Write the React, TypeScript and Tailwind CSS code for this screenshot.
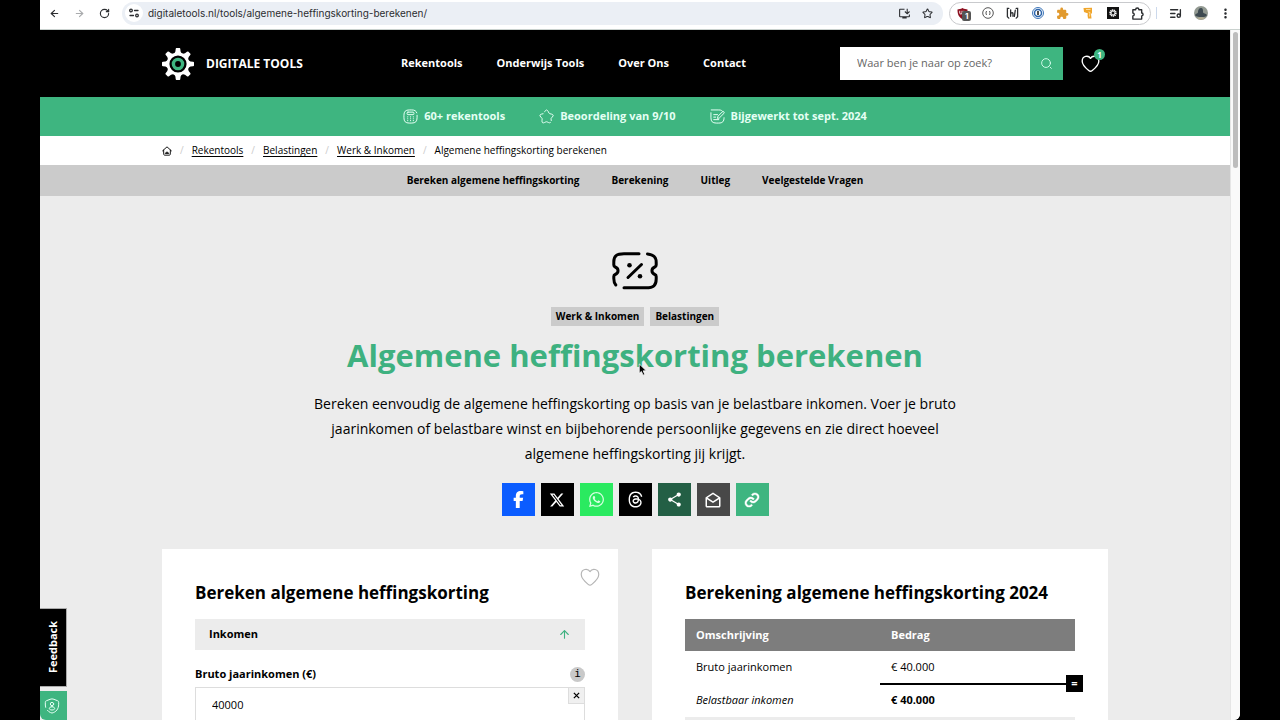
// App.tsx
import React from 'react';
import { ArrowLeft, ArrowRight, RotateCw, Star, ListMusic, ArrowUp } from 'lucide-react';
import { FaFacebookF, FaXTwitter, FaWhatsapp, FaThreads } from 'react-icons/fa6';
import { MdShare, MdMoreVert, MdExtension, MdOutlineInstallDesktop } from 'react-icons/md';
import { BiEnvelopeOpen, BiLink } from 'react-icons/bi';

interface IconProps {
  className?: string;
}

const HeartIcon: React.FC<IconProps> = ({ className }) => (
  <svg viewBox="0 0 24 24" fill="none" stroke="currentColor" strokeLinecap="round" strokeLinejoin="round" className={className}>
    <path d="M12 5.500C9.500 1.300 1.500 1.900 1.500 9.100c0 5 4.400 8.600 8.300 11.800 1.700 1.400 2.700 1.400 4.400 0 3.900-3.200 8.300-6.800 8.300-11.800 0-7.200-8-7.800-10.500-3.600z" />
  </svg>
);

const GearLogo: React.FC<IconProps> = ({ className }) => (
  <svg viewBox="0 0 32 32" className={className} aria-hidden="true">
    <circle cx="16" cy="16" r="10" fill="none" stroke="#fff" strokeWidth="2.800" />
    {[0, 45, 90, 135, 180, 225, 270, 315].map((angle) => (
      <path key={angle} d="M14.400 0h3.200q.6 0 .7 1l.3 2.500 1.400 2.500h-8l1.400-2.500.3-2.500q.1-1 .7-1z" fill="#fff" transform={`rotate(${angle} 16 16)`} />
    ))}
    <circle cx="16" cy="16" r="4.600" fill="none" stroke="#3eb580" strokeWidth="3.400" />
  </svg>
);

const CalculatorIcon: React.FC<IconProps> = ({ className }) => (
  <svg viewBox="0 0 24 24" fill="none" stroke="currentColor" strokeWidth="1.600" strokeLinecap="round" className={className}>
    <path d="M22.500 10v4c0 6-2.500 8.500-8.500 8.500h-4c-6 0-8.500-2.500-8.500-8.500v-4c0-6 2.500-8.500 8.500-8.500h4c4.500 0 7.100 1.400 8.100 4.700" />
    <rect x="6.500" y="5" width="11" height="4" rx="1.500" />
    <path d="M7.500 12.500h.1M12 12.500h.1M16.500 12.500h.1M7.500 15.500h.1M12 15.500h.1M16.500 15.500h.1M7.500 18.500h.1M12 18.500h.1M16.500 18.500h.1" strokeWidth="1.800" />
  </svg>
);

const RatingIcon: React.FC<IconProps> = ({ className }) => (
  <svg viewBox="0 0 24 24" fill="none" stroke="currentColor" strokeWidth="1.600" strokeLinecap="round" strokeLinejoin="round" className={className}>
    <path d="M9 4.500c2-4 4-4 6 0l1 2c.3.600.8.900 1.500 1.100l2 .4c3.700.8 4.200 2.400 1.600 5l-1.300 1.400c-.5.500-.6 1-.5 1.700l.3 2.400" />
    <path d="M18.500 21.500c-.8.900-2 .8-3.500.1l-2-1c-.7-.3-1.300-.3-2 0l-2 1c-3 1.400-4.500.4-4.200-2.900l.2-2.500c.1-.700-.1-1.200-.5-1.700L3 13C.5 10.300 1 8.800 4.500 8l2-.4" />
  </svg>
);

const EditIcon: React.FC<IconProps> = ({ className }) => (
  <svg viewBox="0 0 24 24" fill="none" stroke="currentColor" strokeWidth="1.600" strokeLinecap="round" strokeLinejoin="round" className={className}>
    <path d="M20.500 4c-1.200-1.700-3-2.500-6.500-2.500H2M1.500 6v8c0 6 2.500 8.500 8.500 8.500h4c6 0 8.500-2.500 8.500-8.500" />
    <path d="M12 14.500l.8-3 7-7c1.500-1.500 4 .8 2.500 2.500l-7 7zM6 9h6M6 13h3M6 17h8" />
  </svg>
);

const HomeIcon: React.FC<IconProps> = ({ className }) => (
  <svg viewBox="0 0 24 24" fill="none" stroke="currentColor" strokeWidth="2.200" strokeLinecap="round" strokeLinejoin="round" className={className}>
    <path d="M1.500 11.500 12 2l10.500 9.500M4 10v9c0 2 .8 3 3 3h10c2.200 0 3-1 3-3v-9" />
    <path d="M8 17c1-3.300 7-3.300 8 0z" />
  </svg>
);

const TicketIcon: React.FC<IconProps> = ({ className }) => (
  <svg viewBox="0 0 46 38" fill="none" stroke="#000" strokeWidth="3" strokeLinecap="round" strokeLinejoin="round" className={className}>
    <path d="M27 1.800H12C4.500 1.800 1.800 4 1.800 10v3c0 1 .4 1.600 1.400 2 3.800 1.600 3.800 6 0 7.500-1 .4-1.400 1-1.400 2v2c0 3 .6 4.800 2 6.500" />
    <path d="M35.500 1.900c6.300.6 8.700 3 8.700 8.600V13c0 1-.4 1.600-1.400 2-3.800 1.600-3.800 6 0 7.500 1 .4 1.400 1 1.400 2V27c0 6.500-2.700 8.700-10.200 8.700H12" />
    <path d="M16 25.500 29.500 12.500" />
    <circle cx="17.500" cy="13.300" r="2.300" fill="#000" stroke="none" />
    <circle cx="28" cy="24.300" r="2.300" fill="#000" stroke="none" />
  </svg>
);

const PrivacyIcon: React.FC<IconProps> = ({ className }) => (
  <svg viewBox="0 0 24 24" fill="none" stroke="currentColor" strokeWidth="1.500" strokeLinecap="round" className={className}>
    <path d="M2.500 14c-.5-2-.7-5-.5-7.500C2 5 2.500 4.500 4 4l5-2c2-.8 4-.8 6 0l5 2c1.500.5 2 1 2 2.500.5 8-2 13-8 15.500-1.500.7-2.500.7-4 0-2-.8-3.600-2-4.800-3.500" />
    <circle cx="12" cy="9" r="2.500" />
    <path d="M12 13c-5 0-6 5 0 5s5-5 0-5z" />
  </svg>
);

const BrowserBar = () => (
  <div className="flex h-[30px] shrink-0 items-center border-b border-[#c9d1ce] bg-white pt-px pr-[2px] pb-1 pl-[2px] text-[#2b2d30]">
    <div className="flex">
      <button aria-label="Back" className="flex w-[25px] justify-center"><ArrowLeft size={11} strokeWidth={2.5} /></button>
      <button aria-label="Forward" className="flex w-[25px] justify-center text-[#a9abad]"><ArrowRight size={11} strokeWidth={2.5} /></button>
      <button aria-label="Reload" className="flex w-[25px] justify-center"><RotateCw size={11} strokeWidth={2.5} /></button>
    </div>
    <div className="ml-[5px] flex h-[23px] min-w-0 flex-1 items-center rounded-full bg-[#ebeff5] pr-1 pl-[3px]">
      <button aria-label="Site information" className="flex size-[18px] shrink-0 items-center justify-center rounded-full bg-white">
        <svg viewBox="0 0 10 10" className="size-[10px]" fill="none" stroke="currentColor" strokeWidth="1.300" strokeLinecap="round">
          <circle cx="2" cy="2.500" r="1.300" />
          <path d="M5.500 2.500h3.500M1 7.500h3.500" />
          <circle cx="8" cy="7.500" r="1.300" />
        </svg>
      </button>
      <input
        aria-label="Address"
        className="ml-[5px] min-w-0 flex-1 bg-transparent text-[10px] outline-none"
        defaultValue="digitaletools.nl/tools/algemene-heffingskorting-berekenen/"
      />
      <button aria-label="Install" className="flex w-[23px] justify-center"><MdOutlineInstallDesktop size={13} /></button>
      <button aria-label="Bookmark" className="flex w-[23px] justify-center"><Star size={11} strokeWidth={2.2} /></button>
    </div>
    <div className="ml-1.5 flex h-[23px] items-center rounded-full border border-[#c9cacd]">
      <button aria-label="Ad blocker" className="relative flex w-[25px] justify-center">
        <svg viewBox="0 0 12 12" className="size-[11px]">
          <path d="M6 0c2 1.200 4 1.500 5.500 1.500C11.500 7 10 10 6 12 2 10 .5 7 .5 1.500 2 1.500 4 1.200 6 0z" fill="#8c1020" />
          <path d="M3 3v2.500c0 1.500 2.500 1.500 2.500 0V3M7.500 3v4" stroke="#fff" fill="none" />
        </svg>
        <span className="absolute top-[3px] left-3 rounded-xs bg-[#555] px-[3px] text-[8px] leading-[10px] font-bold text-white">1</span>
      </button>
      <button aria-label="Code" className="flex w-[25px] justify-center">
        <svg viewBox="0 0 12 12" className="size-[12px]" fill="none" stroke="#555">
          <circle cx="6" cy="6" r="5.300" />
          <path d="M4.500 4q-1.200 2 0 4M7.500 4q1.200 2 0 4" />
        </svg>
      </button>
      <button aria-label="Heading inspector" className="flex w-[25px] justify-center">
        <svg viewBox="0 0 14 14" className="size-[13px]" fill="none" stroke="currentColor" strokeWidth="1.400" strokeLinecap="round">
          <path d="M3 1.500H1.500v9L3 12M11 1.500h1.500v9L11 12M5 3v7M5 7q2.500-2 2.500 0v3M10 3.500 9 10" />
        </svg>
      </button>
      <button aria-label="Passwords" className="flex w-[25px] justify-center">
        <svg viewBox="0 0 12 12" className="size-[12px]">
          <circle cx="6" cy="6" r="5.500" fill="#fff" stroke="#3d75b8" />
          <circle cx="6" cy="6" r="3.500" fill="#fff" stroke="#2d66ad" strokeWidth="1.500" />
          <path d="M6 4v4" stroke="#222" strokeWidth="1.600" />
        </svg>
      </button>
      <button aria-label="Extension" className="flex w-[25px] justify-center text-[#e19a2e]"><MdExtension size={13} /></button>
      <button aria-label="Tag extension" className="flex w-[25px] justify-center">
        <svg viewBox="0 0 12 12" className="size-[12px]">
          <path d="M1.500 1 10 .8V6L9 7l.5 4.500H6L5.500 8l.5-1.500L2 5z" fill="#f0a52b" />
          <path d="M4 2.500h4.500M6.500 5l1.500.5-.5 4" stroke="#fff0c8" strokeWidth=".7" fill="none" />
        </svg>
      </button>
      <button aria-label="Settings extension" className="flex w-[25px] justify-center">
        <svg viewBox="0 0 12 12" className="size-[12px]">
          <path d="M0 0h12v12H0z" fill="#111" />
          <circle cx="6" cy="6" r="2.800" fill="none" stroke="#fff" strokeWidth="1.800" strokeDasharray="1.200 .5" />
          <circle cx="6" cy="6" r="1.900" fill="none" stroke="#fff" strokeWidth=".8" />
        </svg>
      </button>
      <button aria-label="Extensions" className="flex w-[25px] justify-center">
        <svg viewBox="0 0 14 14" className="size-[13px]" fill="none" stroke="currentColor" strokeWidth="1.500" strokeLinejoin="round">
          <path d="M2 3h3c0-2.500 3.500-2.500 3.500 0h3v3.500c2 0 2 3 0 3V13H2V9.500c2-.3 2-2.700 0-3z" />
        </svg>
      </button>
    </div>
    <span className="ml-[5px] h-3 w-px bg-[#ccd9ec]" />
    <button aria-label="Media" className="ml-[6px] flex w-[25px] justify-center"><ListMusic size={13} strokeWidth={2.5} /></button>
    <button aria-label="Profile" className="flex w-[25px] justify-center">
      <svg viewBox="0 0 14 14" className="size-[14px]">
        <circle cx="7" cy="7" r="7" fill="#929991" />
        <path d="M1 9c1-2 3-1 3-3s1-4 3-4 2 2 2 4 3 1 4 3c-1 2-3 2-5 2s-6 0-7-2z" fill="#3e4a51" />
        <path d="M3 12c2-1 6-1 8 0-2 2-6 2-8 0z" fill="#b3ac91" />
      </svg>
    </button>
    <button aria-label="Menu" className="flex w-[25px] justify-center"><MdMoreVert size={15} /></button>
  </div>
);

const mainLinks = ['Rekentools', 'Onderwijs Tools', 'Over Ons', 'Contact'];
const crumbs = ['Rekentools', 'Belastingen', 'Werk & Inkomen'];
const pageLinks = ['Bereken algemene heffingskorting', 'Berekening', 'Uitleg', 'Veelgestelde Vragen'];

const usps = [
  { icon: CalculatorIcon, text: '60+ rekentools' },
  { icon: RatingIcon, text: 'Beoordeling van 9/10' },
  { icon: EditIcon, text: 'Bijgewerkt tot sept. 2024' },
];

const shareButtons = [
  { label: 'Facebook', color: 'bg-[#0b5cff]', icon: <FaFacebookF size={17} /> },
  { label: 'X', color: 'bg-black', icon: <FaXTwitter size={16} /> },
  { label: 'WhatsApp', color: 'bg-[#2aea60]', icon: <FaWhatsapp size={17} className="text-[#d8ffe2]" /> },
  { label: 'Threads', color: 'bg-black', icon: <FaThreads size={17} /> },
  { label: 'Delen', color: 'bg-[#235f45]', icon: <MdShare size={17} /> },
  { label: 'E-mail', color: 'bg-[#484848]', icon: <BiEnvelopeOpen size={18} /> },
  { label: 'Link kopiëren', color: 'bg-[#3eb580]', icon: <BiLink size={20} className="stroke-[.5]" /> },
];

const SiteHeader = () => (
  <header className="bg-black text-white">
    <div className="mx-auto flex h-[67px] max-w-[946px] items-center">
      <a href="#" className="flex w-[239px] items-center gap-3 text-[12px] font-bold">
        <GearLogo className="size-8" />
        DIGITALE TOOLS
      </a>
      <nav className="flex gap-[34px] text-[11px] font-bold">
        {mainLinks.map((link) => (
          <a key={link} href="#">{link}</a>
        ))}
      </nav>
      <form className="ml-auto flex h-[33px]">
        <input
          type="search"
          aria-label="Zoeken"
          placeholder="Waar ben je naar op zoek?"
          className="w-[190px] bg-white px-[17px] text-[11px] text-black outline-none placeholder:text-[#666]"
        />
        <button type="button" aria-label="Zoek" className="flex w-[33px] items-center justify-center bg-[#3eb580]">
          <svg viewBox="0 0 12 12" className="size-[11px]" fill="none" stroke="#d9fff0" strokeLinecap="round">
            <circle cx="5.500" cy="5.500" r="4.800" />
            <path d="M10 10l1.300 1.300" />
          </svg>
        </button>
      </form>
      <a href="#" aria-label="Favorieten" className="relative mr-2 ml-[18px]">
        <HeartIcon className="size-[19px] stroke-[1.700]" />
        <span className="absolute -top-[5px] left-[13px] flex size-[11px] items-center justify-center rounded-full bg-[#3eb580] text-[8px] font-bold">1</span>
      </a>
    </div>
  </header>
);

const Hero = () => (
  <section className="flex flex-col items-center pt-[56px] text-center">
    <TicketIcon className="h-[38px] w-[46px]" />
    <div className="mt-[17px] flex gap-[6px] text-[10px] leading-[19px] font-bold">
      <a href="#" className="bg-[#cbcbcb] px-[5px]">Werk &amp; Inkomen</a>
      <a href="#" className="bg-[#cbcbcb] px-[5px]">Belastingen</a>
    </div>
    <h1 className="relative mt-[9px] text-[31px] leading-[40px] font-bold text-[#3eb180]">
      Algemene heffingskorting berekenen
      <svg viewBox="0 0 10 15" className="absolute top-7 left-[291px] h-[14px] w-[10px]">
        <path d="M1 1v10l2.300-2 1.800 4 1.800-.8L5.200 8.400H8.500z" fill="#000" stroke="#fff" strokeWidth=".8" />
      </svg>
    </h1>
    <p className="mt-4 max-w-[668px] text-[14px] leading-[25px]">
      Bereken eenvoudig de algemene heffingskorting op basis van je belastbare inkomen. Voer je bruto jaarinkomen of belastbare winst en bijbehorende persoonlijke gegevens en zie direct hoeveel algemene heffingskorting jij krijgt.
    </p>
    <div className="mt-[17px] flex gap-[6px]">
      {shareButtons.map((button) => (
        <button key={button.label} aria-label={button.label} className={`flex size-[33px] items-center justify-center text-white ${button.color}`}>
          {button.icon}
        </button>
      ))}
    </div>
  </section>
);

const CalculatorCard = () => (
  <section className="relative bg-white p-[33px]">
    <button aria-label="Bewaar als favoriet" className="absolute top-[18px] right-[18px] text-[#b5b5b5]">
      <HeartIcon className="size-[20px] stroke-[1.400]" />
    </button>
    <h2 className="text-[17px] leading-[22px] font-bold">Bereken algemene heffingskorting</h2>
    <button className="mt-[15px] flex h-[31px] w-full items-center justify-between bg-[#ececec] px-[14px] text-[11px] font-bold">
      Inkomen
      <ArrowUp size={13} className="text-[#3eb180]" />
    </button>
    <div className="mt-4 flex h-[16px] items-center justify-between">
      <label htmlFor="gross-income" className="text-[11px] font-bold">Bruto jaarinkomen (€)</label>
      <button aria-label="Uitleg bruto jaarinkomen" className="flex size-[15px] items-center justify-center rounded-full bg-[#c9c9c9] font-['DejaVu_Sans_Mono',monospace] text-[11px]">i</button>
    </div>
    <div className="relative mt-[5px]">
      <input
        id="gross-income"
        defaultValue="40000"
        className="h-[34px] w-full border border-[#ddd] px-4 text-[11px] outline-none"
      />
      <button aria-label="Wissen" className="absolute top-0 right-0 flex size-[17px] items-center justify-center border border-[#ddd] bg-[#f0f0f0]">
        <svg viewBox="0 0 8 8" className="size-[7px]" stroke="#000" strokeWidth="1.500">
          <path d="M1 1l6 6M7 1 1 7" />
        </svg>
      </button>
    </div>
  </section>
);

const ResultCard = () => (
  <section className="bg-white p-[33px]">
    <h2 className="text-[17px] leading-[22px] font-bold">Berekening algemene heffingskorting 2024</h2>
    <table className="mt-[15px] w-full table-fixed text-left text-[11px]">
      <thead>
        <tr className="h-8 bg-[#7d7d7d] text-white">
          <th className="px-[11px] font-bold">Omschrijving</th>
          <th className="px-[11px] font-bold">Bedrag</th>
        </tr>
      </thead>
      <tbody>
        <tr className="h-[33px]">
          <td className="px-[11px]">Bruto jaarinkomen</td>
          <td className="relative px-[11px]">
            € 40.000
            <span className="absolute right-0 -bottom-px left-0 h-[2px] bg-black" />
            <span className="absolute -right-2 -bottom-2 flex size-[17px] items-center justify-center bg-black text-[11px] font-bold text-white">=</span>
          </td>
        </tr>
        <tr className="h-[33px]">
          <td className="px-[11px] italic">Belastbaar inkomen</td>
          <td className="px-[11px] font-bold">€ 40.000</td>
        </tr>
        <tr className="h-[33px] bg-[#ececec]">
          <td />
          <td />
        </tr>
      </tbody>
    </table>
  </section>
);

const App: React.FC = () => {
  return (
    <div className="h-screen overflow-hidden bg-black px-10 text-black">
      <div className="flex h-full flex-col overflow-hidden rounded-br-md bg-white font-[Inter,sans-serif]">
        <BrowserBar />
        <div className="relative flex min-h-0 flex-1">
          <div className="min-w-0 flex-1 overflow-hidden bg-[#ececec] font-['Open_Sans','Noto_Sans',sans-serif]">
            <SiteHeader />
            <div className="flex h-[39px] items-center justify-center gap-[34px] bg-[#3eb580] text-[11px] font-bold text-[#e5fff4]">
              {usps.map((usp) => (
                <span key={usp.text} className="flex items-center gap-[6px]">
                  <usp.icon className="size-[15px]" />
                  {usp.text}
                </span>
              ))}
            </div>
            <nav aria-label="Kruimelpad" className="bg-white text-[10px]">
              <div className="mx-auto flex h-[29px] max-w-[946px] items-center gap-2">
                <a href="#" aria-label="Home"><HomeIcon className="size-[10px]" /></a>
                {crumbs.map((crumb) => (
                  <React.Fragment key={crumb}>
                    <span className="text-[#ccc]">/</span>
                    <a href="#" className="underline underline-offset-2">{crumb}</a>
                  </React.Fragment>
                ))}
                <span className="text-[#ccc]">/</span>
                <span>Algemene heffingskorting berekenen</span>
              </div>
            </nav>
            <nav className="flex h-[31px] items-center justify-center gap-8 bg-[#cbcbcb] text-[10px] font-bold">
              {pageLinks.map((link) => (
                <a key={link} href="#">{link}</a>
              ))}
            </nav>
            <main>
              <Hero />
              <div className="mx-auto mt-[33px] grid max-w-[946px] grid-cols-2 gap-[34px]">
                <CalculatorCard />
                <ResultCard />
              </div>
            </main>
          </div>
          <div className="w-[10px] border-l border-[#e6e6e6] bg-[#fafafa] px-[2px] pt-[2px]">
            <div className="h-[136px] rounded-full bg-[#bdbdbd]" />
          </div>
          <div className="absolute bottom-0 left-0 flex flex-col gap-[4px] font-['Open_Sans','Noto_Sans',sans-serif]">
            <button className="flex h-[79px] w-[27px] items-center justify-center border border-l-0 border-[#aaa] bg-black text-[11px] font-bold text-white">
              <span className="rotate-180 [writing-mode:vertical-rl]">Feedback</span>
            </button>
            <button aria-label="Privacy" className="flex h-[29px] w-[27px] items-center justify-center rounded-bl-md bg-[#3eb580] pr-1 text-[#e5fff4]">
              <PrivacyIcon className="size-4" />
            </button>
          </div>
        </div>
      </div>
    </div>
  );
};

export default App;
